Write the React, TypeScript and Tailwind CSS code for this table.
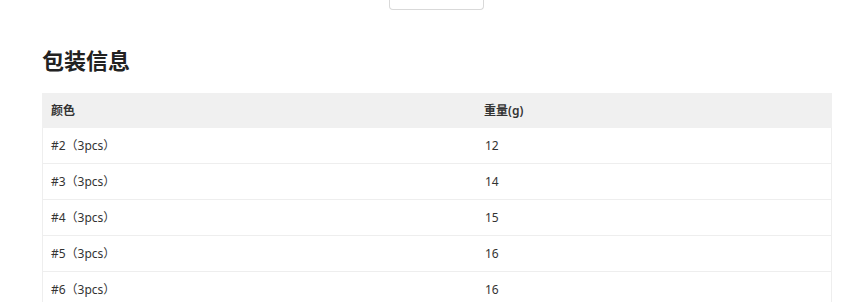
import React from "react";

const rows = [
  { color: "#2（3pcs）", weight: "12" },
  { color: "#3（3pcs）", weight: "14" },
  { color: "#4（3pcs）", weight: "15" },
  { color: "#5（3pcs）", weight: "16" },
  { color: "#6（3pcs）", weight: "16" },
];

export default function App() {
  return (
    <div
      className="h-[302px] overflow-hidden bg-white text-[#333]"
      style={{ fontFamily: '"Noto Sans", "Noto Sans CJK SC", sans-serif' }}
    >
      <div className="ml-[389px] h-[10px] w-[95px] rounded-b-sm border border-t-0 border-[#d9d9d9]" />

      <div className="pl-[42px] pr-[18px]">
        <h2 className="mt-[34px] text-[22px] font-bold leading-[32px] text-[#222]">
          包装信息
        </h2>

        <div className="mt-[17px] text-[12px]">
          <div className="grid h-[35px] grid-cols-[433px_1fr] items-center bg-[#f0f0f0] font-semibold">
            <div className="pl-[9px]">颜色</div>
            <div className="pl-[9px]">重量(g)</div>
          </div>
          {rows.map((r) => (
            <div
              key={r.color}
              className="grid h-[36px] grid-cols-[433px_1fr] items-center border-x border-b border-[#eeeeee]"
            >
              <div className="pl-[8px]">{r.color}</div>
              <div className="pl-[9px]">{r.weight}</div>
            </div>
          ))}
        </div>
      </div>
    </div>
  );
}
